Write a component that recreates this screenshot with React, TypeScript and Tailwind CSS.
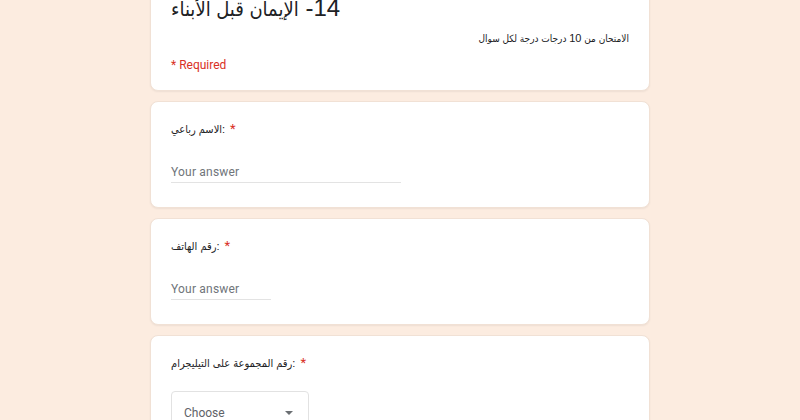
import React from "react";

const ARABIC = { fontFamily: '"Liberation Sans", "DejaVu Sans Condensed", "DejaVu Sans", Arial, sans-serif' };
const ROBOTO = { fontFamily: 'Roboto, "Liberation Sans", sans-serif' };

function Label({ text }: { text: string }) {
  return (
    <div className="flex items-center h-4 text-[11px] leading-4 text-[#202124]">
      <span style={ARABIC}>{text}</span>
      <span className="ml-[5px] text-[#d93025] text-[13px]" style={ROBOTO}>*</span>
    </div>
  );
}

function TextQuestion({ label, width }: { label: string; width: string }) {
  return (
    <div className="bg-white rounded-lg border border-[#f1e1d5] shadow-[0_1px_2px_rgba(0,0,0,0.06)] px-5 pt-[19px] pb-6">
      <Label text={label} />
      <div className={`mt-6 h-[22px] pt-[3px] border-b border-[#e3e3e3] ${width}`}>
        <div className="text-[12px] leading-4 text-[#70757a] tracking-[0.2px]" style={ROBOTO}>
          Your answer
        </div>
      </div>
    </div>
  );
}

export default function App() {
  return (
    <div className="w-full h-[420px] overflow-hidden bg-[#fcece0]">
      <div className="w-[500px] mx-auto mt-[-34px] flex flex-col gap-[10px]">
        <div className="bg-white rounded-lg border border-[#f1e1d5] shadow-[0_1px_2px_rgba(0,0,0,0.06)] px-5 pt-[25px] pb-[17px]">
          <div dir="rtl" className="h-8 text-left text-[24px] leading-8 text-[#202124]" style={ARABIC}>
            14- <span className="text-[20px]">الإيمان قبل الأبناء</span>
          </div>
          <div dir="rtl" className="h-4 mt-[6px] text-right text-[10px] leading-4 text-[#202124]" style={ARABIC}>
            الامتحان من <span className="text-[11px]">10</span> درجات درجة لكل سوال
          </div>
          <div className="h-4 mt-[11px] text-[12px] leading-4 text-[#d93025]" style={ROBOTO}>
            * Required
          </div>
        </div>

        <TextQuestion label="الاسم رباعي:" width="w-[230px]" />
        <TextQuestion label="رقم الهاتف:" width="w-[100px]" />

        <div className="bg-white rounded-lg border border-[#f1e1d5] shadow-[0_1px_2px_rgba(0,0,0,0.06)] px-5 pt-[19px] pb-6">
          <Label text="رقم المجموعة على التيليجرام:" />
          <div className="mt-[20px] w-[138px] h-[44px] border border-[#e2e2e2] rounded flex items-center justify-between pl-3 pr-[15px]">
            <span className="text-[12px] text-[#5f6368]" style={ROBOTO}>Choose</span>
            <svg width="8" height="4" viewBox="0 0 8 4">
              <path d="M0 0 L8 0 L4 4 Z" fill="#6b6f73" />
            </svg>
          </div>
        </div>
      </div>
    </div>
  );
}
